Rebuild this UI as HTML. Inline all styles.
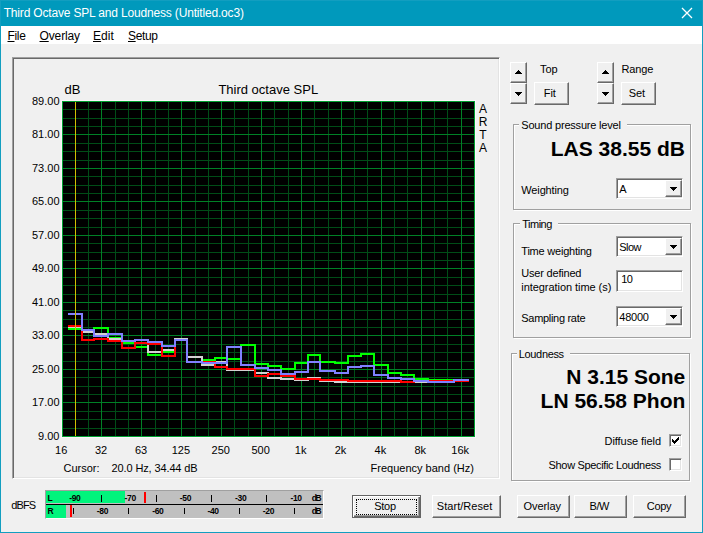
<!DOCTYPE html><html><head><meta charset="utf-8"><title>Third Octave SPL and Loudness</title><style>
html,body{margin:0;padding:0;}
body{width:703px;height:533px;overflow:hidden;background:#f0f0f0;font-family:"Liberation Sans",sans-serif;color:#000;}
#win{position:relative;width:703px;height:533px;overflow:hidden;background:#f0f0f0;}
#win *{box-sizing:border-box;}
.a{position:absolute;}
.t{position:absolute;white-space:nowrap;}
.btn{position:absolute;background:#f0f0f0;border:1px solid;border-color:#fff #696969 #696969 #fff;box-shadow:inset -1px -1px 0 #a0a0a0, inset 1px 1px 0 #f0f0f0;}
.btn.def{border-color:#646464;box-shadow:inset 1px 1px 0 #fff, inset -1px -1px 0 #696969, inset -2px -2px 0 #a0a0a0;}
.sunk{position:absolute;background:#fff;border:1px solid;border-color:#a0a0a0 #fff #fff #a0a0a0;box-shadow:inset 1px 1px 0 #696969, inset -1px -1px 0 #e3e3e3;}
.grp{position:absolute;border:1px solid #a0a0a0;box-shadow:1px 1px 0 #fff, inset 1px 1px 0 #fff;}
.gl{position:absolute;background:#f0f0f0;height:4px;}
.chk{position:absolute;width:13px;height:13px;background:#fff;border:1px solid;border-color:#a0a0a0 #fff #fff #a0a0a0;box-shadow:inset 1px 1px 0 #696969, inset -1px -1px 0 #e3e3e3;}
u{text-decoration:underline;}
</style></head><body><div id="win">
<div class="a" style="left:0;top:0;width:703px;height:26px;background:#0099bc"></div>
<div class="a" style="left:0;top:26px;width:703px;height:18px;background:#fff"></div>
<div class="a" style="left:0;top:0;width:1px;height:533px;background:#129ec0"></div>
<div class="a" style="left:702px;top:0;width:1px;height:533px;background:#129ec0"></div>
<div class="a" style="left:0;top:532px;width:703px;height:1px;background:#129ec0"></div>
<div class="a" style="left:0;top:0;width:703px;height:1px;background:#129ec0"></div>
<div class="t" style="top:4.84px;font-size:12px;line-height:16px;left:3.70px;letter-spacing:-0.173px;color:#fff;">Third Octave SPL and Loudness (Untitled.oc3)</div>
<svg class="a" style="left:676px;top:2px" width="22" height="22" viewBox="0 0 22 22"><path d="M6 6 L16 16 M16 6 L6 16" stroke="#fff" stroke-width="1.3" fill="none"/></svg>
<div class="t" style="top:27.54px;font-size:12px;line-height:16px;left:7.50px;letter-spacing:-0.336px;"><u>F</u>ile</div>
<div class="t" style="top:27.54px;font-size:12px;line-height:16px;left:39.50px;letter-spacing:-0.121px;"><u>O</u>verlay</div>
<div class="t" style="top:27.54px;font-size:12px;line-height:16px;left:93.00px;letter-spacing:0.082px;"><u>E</u>dit</div>
<div class="t" style="top:27.54px;font-size:12px;line-height:16px;left:128.00px;letter-spacing:-0.369px;"><u>S</u>etup</div>
<div class="a" style="left:12px;top:57px;width:488px;height:422px;border:1px solid;border-color:#a0a0a0 #fff #fff #a0a0a0;box-shadow:inset 1px 1px 0 #696969, inset -1px -1px 0 #e3e3e3;"></div>
<svg class="a" style="left:0;top:0" width="703" height="533" viewBox="0 0 703 533" shape-rendering="crispEdges"><rect x="61" y="100" width="415" height="338" fill="#fbf6fb"/><rect x="62" y="101" width="413" height="336" fill="#000"/><rect x="62" y="109" width="413" height="1" fill="#004d17"/><rect x="62" y="118" width="413" height="1" fill="#004d17"/><rect x="62" y="126" width="413" height="1" fill="#004d17"/><rect x="62" y="143" width="413" height="1" fill="#004d17"/><rect x="62" y="151" width="413" height="1" fill="#004d17"/><rect x="62" y="160" width="413" height="1" fill="#004d17"/><rect x="62" y="176" width="413" height="1" fill="#004d17"/><rect x="62" y="185" width="413" height="1" fill="#004d17"/><rect x="62" y="193" width="413" height="1" fill="#004d17"/><rect x="62" y="210" width="413" height="1" fill="#004d17"/><rect x="62" y="218" width="413" height="1" fill="#004d17"/><rect x="62" y="227" width="413" height="1" fill="#004d17"/><rect x="62" y="243" width="413" height="1" fill="#004d17"/><rect x="62" y="252" width="413" height="1" fill="#004d17"/><rect x="62" y="260" width="413" height="1" fill="#004d17"/><rect x="62" y="277" width="413" height="1" fill="#004d17"/><rect x="62" y="285" width="413" height="1" fill="#004d17"/><rect x="62" y="294" width="413" height="1" fill="#004d17"/><rect x="62" y="310" width="413" height="1" fill="#004d17"/><rect x="62" y="319" width="413" height="1" fill="#004d17"/><rect x="62" y="327" width="413" height="1" fill="#004d17"/><rect x="62" y="344" width="413" height="1" fill="#004d17"/><rect x="62" y="352" width="413" height="1" fill="#004d17"/><rect x="62" y="361" width="413" height="1" fill="#004d17"/><rect x="62" y="377" width="413" height="1" fill="#004d17"/><rect x="62" y="386" width="413" height="1" fill="#004d17"/><rect x="62" y="394" width="413" height="1" fill="#004d17"/><rect x="62" y="411" width="413" height="1" fill="#004d17"/><rect x="62" y="419" width="413" height="1" fill="#004d17"/><rect x="62" y="428" width="413" height="1" fill="#004d17"/><rect x="75" y="101" width="1" height="336" fill="#004d17"/><rect x="88" y="101" width="1" height="336" fill="#004d17"/><rect x="115" y="101" width="1" height="336" fill="#004d17"/><rect x="128" y="101" width="1" height="336" fill="#004d17"/><rect x="155" y="101" width="1" height="336" fill="#004d17"/><rect x="168" y="101" width="1" height="336" fill="#004d17"/><rect x="195" y="101" width="1" height="336" fill="#004d17"/><rect x="208" y="101" width="1" height="336" fill="#004d17"/><rect x="234" y="101" width="1" height="336" fill="#004d17"/><rect x="248" y="101" width="1" height="336" fill="#004d17"/><rect x="274" y="101" width="1" height="336" fill="#004d17"/><rect x="288" y="101" width="1" height="336" fill="#004d17"/><rect x="314" y="101" width="1" height="336" fill="#004d17"/><rect x="328" y="101" width="1" height="336" fill="#004d17"/><rect x="354" y="101" width="1" height="336" fill="#004d17"/><rect x="367" y="101" width="1" height="336" fill="#004d17"/><rect x="394" y="101" width="1" height="336" fill="#004d17"/><rect x="407" y="101" width="1" height="336" fill="#004d17"/><rect x="434" y="101" width="1" height="336" fill="#004d17"/><rect x="447" y="101" width="1" height="336" fill="#004d17"/><rect x="62" y="134" width="413" height="1" fill="#008026"/><rect x="62" y="168" width="413" height="1" fill="#008026"/><rect x="62" y="201" width="413" height="1" fill="#008026"/><rect x="62" y="235" width="413" height="1" fill="#008026"/><rect x="62" y="268" width="413" height="1" fill="#008026"/><rect x="62" y="302" width="413" height="1" fill="#008026"/><rect x="62" y="335" width="413" height="1" fill="#008026"/><rect x="62" y="369" width="413" height="1" fill="#008026"/><rect x="62" y="402" width="413" height="1" fill="#008026"/><rect x="101" y="101" width="1" height="336" fill="#008026"/><rect x="141" y="101" width="1" height="336" fill="#008026"/><rect x="181" y="101" width="1" height="336" fill="#008026"/><rect x="221" y="101" width="1" height="336" fill="#008026"/><rect x="261" y="101" width="1" height="336" fill="#008026"/><rect x="301" y="101" width="1" height="336" fill="#008026"/><rect x="341" y="101" width="1" height="336" fill="#008026"/><rect x="381" y="101" width="1" height="336" fill="#008026"/><rect x="421" y="101" width="1" height="336" fill="#008026"/><rect x="461" y="101" width="1" height="336" fill="#008026"/><path d="M62.5 101.5 H474.5 V436.5 H62.5 Z" fill="none" stroke="#00a030" stroke-width="1"/><path d="M68 329 H82 V330 H94 V328 H108 V338 H122 V343 H135 V347 H148 V355 H162 V352 H175 V340 H187 V362 H202 V360 H215 V358 H227 V359 H241 V345 H255 V364 H268 V366 H281 V369 H295 V363 H308 V355 H320 V362 H335 V363 H348 V356 H361 V354 H374 V365 H388 V373 H401 V375 H414 V379 H428 V380 H441 V380 H454 V381 H469" fill="none" stroke="#00ff00" stroke-width="2" stroke-linejoin="miter" stroke-linecap="butt"/><path d="M68 327 H82 V332 H94 V334 H108 V339 H122 V341 H135 V343 H148 V352 H162 V350 H175 V339 H187 V357 H202 V365 H215 V362 H227 V370 H241 V370 H255 V373 H268 V378 H281 V379 H295 V380 H308 V378 H320 V381 H335 V382 H348 V382 H361 V382 H374 V382 H388 V382 H401 V382 H414 V382 H428 V382 H441 V382 H454 V381 H469" fill="none" stroke="#d2d2d2" stroke-width="2" stroke-linejoin="miter" stroke-linecap="butt"/><path d="M68 326 H82 V340 H94 V339 H108 V341 H122 V348 H135 V343 H148 V344 H162 V356 H175 V340 H187 V362 H202 V362 H215 V367 H227 V369 H241 V369 H255 V376 H268 V374 H281 V376 H295 V379 H308 V379 H320 V380 H335 V380 H348 V381 H361 V381 H374 V381 H388 V381 H401 V382 H414 V381 H428 V381 H441 V381 H454 V381 H469" fill="none" stroke="#ff0000" stroke-width="2" stroke-linejoin="miter" stroke-linecap="butt"/><path d="M68 314 H82 V330 H94 V336 H108 V334 H122 V341 H135 V340 H148 V342 H162 V346 H175 V340 H187 V362 H202 V363 H215 V363 H227 V347 H241 V365 H255 V368 H268 V370 H281 V374 H295 V372 H308 V362 H320 V371 H335 V373 H348 V367 H361 V366 H374 V375 H388 V378 H401 V379 H414 V381 H428 V382 H441 V382 H454 V380 H469" fill="none" stroke="#8080ff" stroke-width="2" stroke-linejoin="miter" stroke-linecap="butt"/><rect x="75" y="102" width="1" height="334" fill="#d0c000"/></svg>
<div class="t" style="top:81.00px;font-size:13px;line-height:17px;left:64.60px;">dB</div>
<div class="t" style="top:81.00px;font-size:13px;line-height:17px;left:218.40px;">Third octave SPL</div>
<div class="t" style="top:93.69px;font-size:11px;line-height:15px;right:643.50px;">89.00</div>
<div class="t" style="top:127.19px;font-size:11px;line-height:15px;right:643.50px;">81.00</div>
<div class="t" style="top:160.69px;font-size:11px;line-height:15px;right:643.50px;">73.00</div>
<div class="t" style="top:194.19px;font-size:11px;line-height:15px;right:643.50px;">65.00</div>
<div class="t" style="top:227.69px;font-size:11px;line-height:15px;right:643.50px;">57.00</div>
<div class="t" style="top:261.19px;font-size:11px;line-height:15px;right:643.50px;">49.00</div>
<div class="t" style="top:294.69px;font-size:11px;line-height:15px;right:643.50px;">41.00</div>
<div class="t" style="top:328.19px;font-size:11px;line-height:15px;right:643.50px;">33.00</div>
<div class="t" style="top:361.69px;font-size:11px;line-height:15px;right:643.50px;">25.00</div>
<div class="t" style="top:395.19px;font-size:11px;line-height:15px;right:643.50px;">17.00</div>
<div class="t" style="top:428.69px;font-size:11px;line-height:15px;right:643.50px;">9.00</div>
<div class="t" style="top:442.89px;font-size:11px;line-height:15px;left:55.08px;">16</div>
<div class="t" style="top:442.89px;font-size:11px;line-height:15px;left:94.98px;">32</div>
<div class="t" style="top:442.89px;font-size:11px;line-height:15px;left:134.88px;">63</div>
<div class="t" style="top:442.89px;font-size:11px;line-height:15px;left:171.71px;">125</div>
<div class="t" style="top:442.89px;font-size:11px;line-height:15px;left:211.61px;">250</div>
<div class="t" style="top:442.89px;font-size:11px;line-height:15px;left:251.51px;">500</div>
<div class="t" style="top:442.89px;font-size:11px;line-height:15px;left:294.79px;">1k</div>
<div class="t" style="top:442.89px;font-size:11px;line-height:15px;left:334.69px;">2k</div>
<div class="t" style="top:442.89px;font-size:11px;line-height:15px;left:374.59px;">4k</div>
<div class="t" style="top:442.89px;font-size:11px;line-height:15px;left:414.49px;">8k</div>
<div class="t" style="top:442.89px;font-size:11px;line-height:15px;left:451.32px;">16k</div>
<div class="t" style="top:460.69px;font-size:11px;line-height:15px;left:63.50px;">Cursor:</div>
<div class="t" style="top:460.69px;font-size:11px;line-height:15px;left:111.60px;letter-spacing:-0.127px;">20.0 Hz, 34.44 dB</div>
<div class="t" style="top:460.69px;font-size:11px;line-height:15px;right:229.10px;">Frequency band (Hz)</div>
<div class="t" style="top:101.24px;font-size:12px;line-height:16px;left:479.00px;">A</div>
<div class="t" style="top:114.24px;font-size:12px;line-height:16px;left:478.66px;">R</div>
<div class="t" style="top:127.24px;font-size:12px;line-height:16px;left:479.34px;">T</div>
<div class="t" style="top:140.24px;font-size:12px;line-height:16px;left:479.00px;">A</div>
<div class="btn" style="left:510px;top:62px;width:17px;height:21px"></div>
<svg class="a" style="left:0;top:0" width="703" height="533" shape-rendering="crispEdges"><path d="M518 70h1v1h1v1h1v1h1v1h-7v-1h1v-1h1v-1h1z" fill="#000"/></svg>
<div class="btn" style="left:510px;top:83px;width:17px;height:21px"></div>
<svg class="a" style="left:0;top:0" width="703" height="533" shape-rendering="crispEdges"><path d="M515 92h7v1h-1v1h-1v1h-1v1h-1v-1h-1v-1h-1v-1h-1z" fill="#000"/></svg>
<div class="btn" style="left:597px;top:62px;width:17px;height:21px"></div>
<svg class="a" style="left:0;top:0" width="703" height="533" shape-rendering="crispEdges"><path d="M605 70h1v1h1v1h1v1h1v1h-7v-1h1v-1h1v-1h1z" fill="#000"/></svg>
<div class="btn" style="left:597px;top:83px;width:17px;height:21px"></div>
<svg class="a" style="left:0;top:0" width="703" height="533" shape-rendering="crispEdges"><path d="M602 92h7v1h-1v1h-1v1h-1v1h-1v-1h-1v-1h-1v-1h-1z" fill="#000"/></svg>
<div class="t" style="top:62.49px;font-size:11px;line-height:15px;left:540.00px;letter-spacing:-0.083px;">Top</div>
<div class="t" style="top:62.49px;font-size:11px;line-height:15px;left:621.60px;letter-spacing:-0.188px;">Range</div>
<div class="btn" style="left:534px;top:82px;width:35px;height:23px"></div>
<div class="t" style="top:85.99px;font-size:11px;line-height:15px;left:543.80px;letter-spacing:-0.073px;">Fit</div>
<div class="btn" style="left:621px;top:82px;width:35px;height:23px"></div>
<div class="t" style="top:85.99px;font-size:11px;line-height:15px;left:628.80px;letter-spacing:-0.177px;">Set</div>
<div class="grp" style="left:513px;top:124px;width:178px;height:86px"></div>
<div class="gl" style="left:519px;top:123px;width:107.5px"></div>
<div class="t" style="top:118.49px;font-size:11px;line-height:15px;left:521.30px;letter-spacing:-0.195px;">Sound pressure level</div>
<div class="grp" style="left:513px;top:223px;width:178px;height:115px"></div>
<div class="gl" style="left:520px;top:222px;width:37.5px"></div>
<div class="t" style="top:217.49px;font-size:11px;line-height:15px;left:522.30px;letter-spacing:-0.516px;">Timing</div>
<div class="grp" style="left:511px;top:353px;width:179px;height:128px"></div>
<div class="gl" style="left:516.5px;top:352px;width:53px"></div>
<div class="t" style="top:347.49px;font-size:11px;line-height:15px;left:518.80px;letter-spacing:-0.344px;">Loudness</div>
<div class="t" style="top:135.02px;font-size:21px;line-height:28px;right:18.00px;font-weight:bold;">LAS 38.55 dB</div>
<div class="t" style="top:363.02px;font-size:21px;line-height:28px;right:17.70px;font-weight:bold;">N 3.15 Sone</div>
<div class="t" style="top:387.02px;font-size:21px;line-height:28px;right:17.70px;font-weight:bold;">LN 56.58 Phon</div>
<div class="t" style="top:182.99px;font-size:11px;line-height:15px;left:521.30px;letter-spacing:-0.137px;">Weighting</div>
<div class="sunk" style="left:616px;top:178px;width:67px;height:21px"></div>
<div class="btn" style="left:665px;top:180px;width:17px;height:17px"></div>
<svg class="a" style="left:0;top:0" width="703" height="533" shape-rendering="crispEdges"><path d="M670 187h7v1h-1v1h-1v1h-1v1h-1v-1h-1v-1h-1v-1h-1z" fill="#000"/></svg>
<div class="t" style="top:181.99px;font-size:11px;line-height:15px;left:619.30px;letter-spacing:-0.344px;">A</div>
<div class="t" style="top:243.99px;font-size:11px;line-height:15px;left:521.30px;letter-spacing:-0.221px;">Time weighting</div>
<div class="sunk" style="left:616px;top:236px;width:67px;height:21px"></div>
<div class="btn" style="left:665px;top:238px;width:17px;height:17px"></div>
<svg class="a" style="left:0;top:0" width="703" height="533" shape-rendering="crispEdges"><path d="M670 245h7v1h-1v1h-1v1h-1v1h-1v-1h-1v-1h-1v-1h-1z" fill="#000"/></svg>
<div class="t" style="top:239.99px;font-size:11px;line-height:15px;left:619.30px;letter-spacing:-0.586px;">Slow</div>
<div class="t" style="top:266.49px;font-size:11px;line-height:15px;left:521.30px;letter-spacing:-0.201px;">User defined</div>
<div class="t" style="top:279.99px;font-size:11px;line-height:15px;left:521.30px;letter-spacing:-0.056px;">integration time (s)</div>
<div class="sunk" style="left:616px;top:270px;width:67px;height:22px"></div>
<div class="t" style="top:272.49px;font-size:11px;line-height:15px;left:621.30px;letter-spacing:-0.625px;">10</div>
<div class="t" style="top:310.99px;font-size:11px;line-height:15px;left:521.30px;letter-spacing:-0.300px;">Sampling rate</div>
<div class="sunk" style="left:616px;top:306px;width:67px;height:21px"></div>
<div class="btn" style="left:665px;top:308px;width:17px;height:17px"></div>
<svg class="a" style="left:0;top:0" width="703" height="533" shape-rendering="crispEdges"><path d="M670 315h7v1h-1v1h-1v1h-1v1h-1v-1h-1v-1h-1v-1h-1z" fill="#000"/></svg>
<div class="t" style="top:309.99px;font-size:11px;line-height:15px;left:619.30px;letter-spacing:-0.225px;">48000</div>
<div class="t" style="top:434.09px;font-size:11px;line-height:15px;right:42.00px;letter-spacing:-0.061px;">Diffuse field</div>
<div class="t" style="top:458.09px;font-size:11px;line-height:15px;right:42.00px;letter-spacing:-0.338px;">Show Specific Loudness</div>
<div class="chk" style="left:669px;top:434px"></div>
<svg class="a" style="left:672px;top:437px" width="7" height="7" viewBox="0 0 7 7" shape-rendering="crispEdges"><path d="M0 2h1v1h1v1h1v-1h1v-1h1v-1h1v-1h1v3h-1v1h-1v1h-1v1h-1v1h-1v-1h-1v-1h-1z" fill="#000"/></svg>
<div class="chk" style="left:669px;top:458px"></div>
<div class="t" style="top:497.79px;font-size:11px;line-height:15px;left:11.30px;letter-spacing:-0.883px;">dBFS</div>
<div class="a" style="left:45px;top:490px;width:279px;height:29px;background:#c0c0c0;border:1px solid;border-color:#a0a0a0 #fff #fff #a0a0a0"></div>
<div class="a" style="left:46px;top:504px;width:277px;height:1px;background:#000"></div>
<div class="a" style="left:46px;top:491px;width:79px;height:12px;background:#00f47c"></div>
<div class="a" style="left:46px;top:505px;width:20px;height:13px;background:#00f47c"></div>
<div class="a" style="left:144px;top:492px;width:2px;height:11px;background:#f00"></div>
<div class="a" style="left:70px;top:505px;width:2px;height:12px;background:#f00"></div>
<div class="a" style="left:101px;top:495px;width:1px;height:7px;background:#000"></div>
<div class="a" style="left:156px;top:495px;width:1px;height:7px;background:#000"></div>
<div class="a" style="left:211px;top:495px;width:1px;height:7px;background:#000"></div>
<div class="a" style="left:266px;top:495px;width:1px;height:7px;background:#000"></div>
<div class="a" style="left:73px;top:508px;width:1px;height:6px;background:#000"></div>
<div class="a" style="left:128px;top:508px;width:1px;height:6px;background:#000"></div>
<div class="a" style="left:184px;top:508px;width:1px;height:6px;background:#000"></div>
<div class="a" style="left:239px;top:508px;width:1px;height:6px;background:#000"></div>
<div class="a" style="left:294px;top:508px;width:1px;height:6px;background:#000"></div>
<div class="t" style="top:492.35px;font-size:8.5px;line-height:12px;left:69.20px;letter-spacing:-0.332px;font-weight:bold;">-90</div>
<div class="t" style="top:492.35px;font-size:8.5px;line-height:12px;left:124.50px;letter-spacing:-0.332px;font-weight:bold;">-70</div>
<div class="t" style="top:492.35px;font-size:8.5px;line-height:12px;left:179.80px;letter-spacing:-0.332px;font-weight:bold;">-50</div>
<div class="t" style="top:492.35px;font-size:8.5px;line-height:12px;left:235.10px;letter-spacing:-0.332px;font-weight:bold;">-30</div>
<div class="t" style="top:492.35px;font-size:8.5px;line-height:12px;left:290.40px;letter-spacing:-0.332px;font-weight:bold;">-10</div>
<div class="t" style="top:505.35px;font-size:8.5px;line-height:12px;left:96.85px;letter-spacing:-0.332px;font-weight:bold;">-80</div>
<div class="t" style="top:505.35px;font-size:8.5px;line-height:12px;left:152.15px;letter-spacing:-0.332px;font-weight:bold;">-60</div>
<div class="t" style="top:505.35px;font-size:8.5px;line-height:12px;left:207.45px;letter-spacing:-0.332px;font-weight:bold;">-40</div>
<div class="t" style="top:505.35px;font-size:8.5px;line-height:12px;left:262.75px;letter-spacing:-0.332px;font-weight:bold;">-20</div>
<div class="t" style="top:492.35px;font-size:8.5px;line-height:12px;left:47.50px;font-weight:bold;">L</div>
<div class="t" style="top:505.35px;font-size:8.5px;line-height:12px;left:47.50px;font-weight:bold;">R</div>
<div class="t" style="top:492.35px;font-size:8.5px;line-height:12px;left:311.70px;letter-spacing:-1.264px;font-weight:bold;">dB</div>
<div class="t" style="top:505.35px;font-size:8.5px;line-height:12px;left:311.70px;letter-spacing:-1.264px;font-weight:bold;">dB</div>
<div class="btn def" style="left:352px;top:495px;width:69px;height:23px"></div>
<div class="t" style="top:499.49px;font-size:11px;line-height:15px;left:374.30px;letter-spacing:-0.289px;">Stop</div>
<div class="a" style="left:356px;top:499px;width:61px;height:16px;border:1px dotted #000"></div>
<div class="btn" style="left:432px;top:495px;width:69px;height:23px"></div>
<div class="t" style="top:499.49px;font-size:11px;line-height:15px;left:436.80px;letter-spacing:0.040px;">Start/Reset</div>
<div class="btn" style="left:517px;top:495px;width:53px;height:23px"></div>
<div class="t" style="top:499.49px;font-size:11px;line-height:15px;left:523.50px;letter-spacing:-0.058px;">Overlay</div>
<div class="btn" style="left:574px;top:495px;width:53px;height:23px"></div>
<div class="t" style="top:499.49px;font-size:11px;line-height:15px;left:589.50px;letter-spacing:-0.427px;">B/W</div>
<div class="btn" style="left:633px;top:495px;width:53px;height:23px"></div>
<div class="t" style="top:499.49px;font-size:11px;line-height:15px;left:646.80px;letter-spacing:-0.297px;">Copy</div>
</div></body></html>
